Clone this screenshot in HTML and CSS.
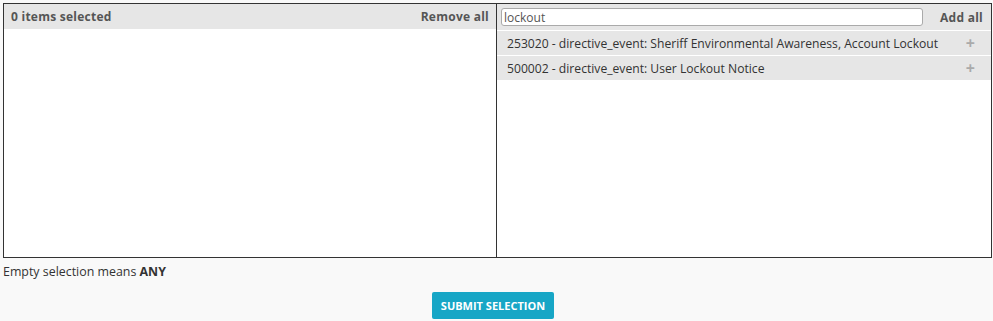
FILE: index.html
```html
<!DOCTYPE html>
<html lang="en">
<head>
  <meta charset="UTF-8">
  <title>Selection</title>
  <link rel="stylesheet" href="styles.css">
</head>
<body>
  <div class="picker">
    <!-- selected items -->
    <div class="pane pane-left">
      <div class="pane-head">
        <span class="count">0 items selected</span>
        <a class="head-link">Remove all</a>
      </div>
      <ul class="items"></ul>
    </div>
    <!-- available items -->
    <div class="pane pane-right">
      <div class="pane-head">
        <input class="search" type="text" value="lockout">
        <a class="head-link">Add all</a>
      </div>
      <ul class="items">
        <li><span>253020 - directive_event: Sheriff Environmental Awareness, Account Lockout</span><span class="plus">+</span></li>
        <li><span>500002 - directive_event: User Lockout Notice</span><span class="plus">+</span></li>
      </ul>
    </div>
  </div>
  <p class="note">Empty selection means <b>ANY</b></p>
  <div class="actions">
    <button class="submit">SUBMIT SELECTION</button>
  </div>
</body>
</html>
```

FILE: styles.css
```css
body {
  margin: 0;
  padding: 3px 1px 0 3px;
  background: #f9f9f9;
  font-family: "Open Sans", sans-serif;
  font-size: 12px;
  color: #333;
}

.picker {
  display: flex;
  height: 253px;
  border: 1px solid #333;
  background: #fff;
}

.pane {
  display: flex;
  flex-direction: column;
}

.pane-left {
  width: 492px;
  border-right: 1px solid #333;
}

.pane-right {
  flex: 1;
}

.pane-head {
  display: flex;
  align-items: center;
  justify-content: space-between;
  height: 25px;
  padding: 0 7px;
  background: #e6e6e6;
  color: #555;
  font-weight: bold;
  letter-spacing: 0.25px;
}

.pane-right .pane-head {
  height: 26px;
  padding: 0 8px 0 4px;
}

.head-link {
  cursor: pointer;
}

.search {
  box-sizing: border-box;
  width: 422px;
  height: 18px;
  margin: 0;
  padding: 0 2px;
  border: 1px solid #aaa;
  border-radius: 3px;
  font-family: inherit;
  font-size: 12px;
  letter-spacing: 0;
  font-weight: normal;
  color: #555;
  background: #fff;
}

.items {
  list-style: none;
  margin: 0;
  padding: 0;
}

.items li {
  display: flex;
  justify-content: space-between;
  align-items: center;
  height: 24px;
  padding: 0 16px 0 10px;
  background: #e6e6e6;
  border-top: 1px solid #fff;
  font-size: 12.15px;
}

.plus {
  color: #aaa;
  font-size: 16px;
  font-weight: bold;
}

.note {
  margin: 5px 0 0;
  font-size: 12.4px;
}

.note b {
  color: #333;
}

.actions {
  display: flex;
  justify-content: center;
  margin-top: 12px;
  padding-right: 9px;
}

.submit {
  height: 27px;
  padding: 0 9px;
  background: #17a6c6;
  color: #fff;
  border: none;
  border-radius: 2px;
  font-family: inherit;
  font-size: 11px;
  font-weight: bold;
  cursor: pointer;
}
```
